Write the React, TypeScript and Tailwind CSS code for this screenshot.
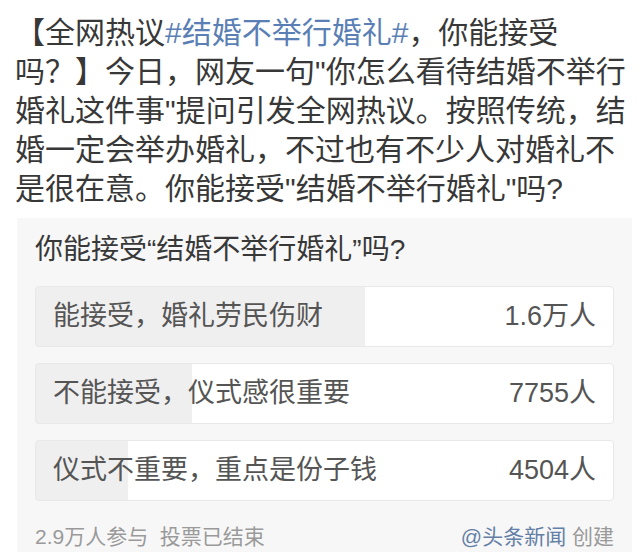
import React from "react";

const font = { fontFamily: '"Liberation Sans", "Noto Sans CJK SC", sans-serif' };

const options = [
  { label: "能接受，婚礼劳民伤财", count: "1.6万人", pct: 57 },
  { label: "不能接受，仪式感很重要", count: "7755人", pct: 27 },
  { label: "仪式不重要，重点是份子钱", count: "4504人", pct: 16 },
];

export default function App() {
  return (
    <div
      className="w-[641px] h-[552px] overflow-hidden bg-white"
      style={font}
    >
      <p className="pl-[15px] pr-[10px] pt-[13px] text-[30px] leading-[39px] text-[#383838]">
        【全网热议<span className="text-[#5a7fb5]">#结婚不举行婚礼#</span>，你能接受吗？】今日，网友一句"你怎么看待结婚不举行婚礼这件事"提问引发全网热议。按照传统，结婚一定会举办婚礼，不过也有不少人对婚礼不是很在意。你能接受"结婚不举行婚礼"吗?
      </p>
      <div className="mt-[10px] ml-[17px] w-[615px] bg-[#f7f7f8] px-[18px] pt-[17px] pb-[20px]">
        <div className="text-[28px] leading-[30px] text-[#383838]">
          你能接受“结婚不举行婚礼”吗?
        </div>
        <div className="mt-[21px] flex flex-col gap-[16px]">
          {options.map((o) => (
            <div
              key={o.label}
              className="flex h-[61px] items-center justify-between rounded-[4px] border border-[#e8e8e8] px-[17px] text-[27px] text-[#555]"
              style={{
                backgroundImage: `linear-gradient(to right, #efefef ${o.pct}%, #ffffff ${o.pct}%)`,
              }}
            >
              <span>{o.label}</span>
              <span>{o.count}</span>
            </div>
          ))}
        </div>
        <div className="mt-[24px] flex items-center justify-between text-[21px] leading-[24px] text-[#9a9a9a]">
          <span>2.9万人参与&nbsp;&nbsp;投票已结束</span>
          <span>
            <span className="text-[#647fa6]">@头条新闻</span> 创建
          </span>
        </div>
      </div>
    </div>
  );
}
